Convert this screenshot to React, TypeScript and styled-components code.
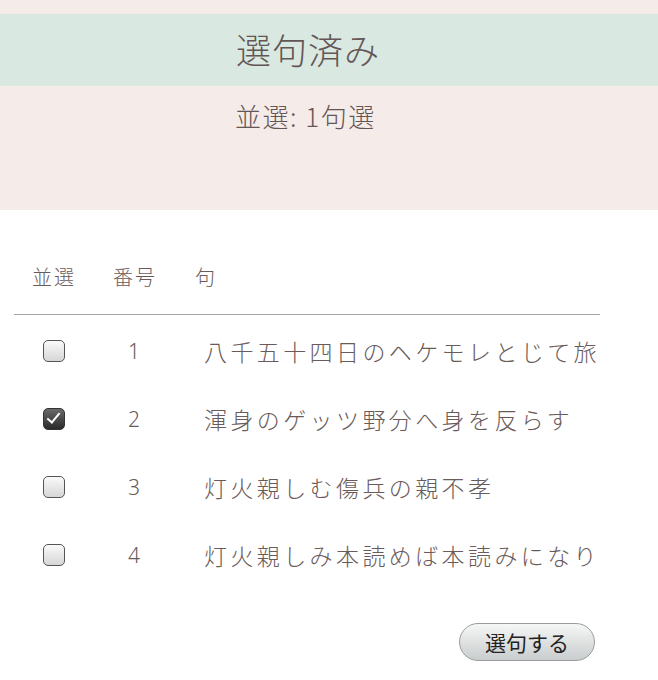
import React, { useState } from 'react';
import styled, { createGlobalStyle } from 'styled-components';

const GlobalStyle = createGlobalStyle`
    html, body {
        margin: 0;
        padding: 0;
        background: #ffffff;
    }
    body {
        font-family: "Noto Sans CJK JP", "Noto Sans", sans-serif;
        font-weight: 300;
        color: #6a5b5b;
    }
`

const Header = styled.header`
    background: #f5ebe8;
    padding-top: 14px;
    height: 196px;
`

const TitleBand = styled.div`
    background: #d9e8e0;
    height: 72px;
    display: flex;
    align-items: center;
    padding-left: 236px;
`

const Title = styled.h1`
    margin: -3px 0 0;
    font-size: 35px;
    font-weight: 300;
    letter-spacing: 1px;
    line-height: 1;
    color: #645656;
`

const Summary = styled.p`
    margin: 17px 0 0;
    padding-left: 235px;
    font-size: 26px;
    letter-spacing: 1.5px;
    line-height: 1;
    color: #645656;
`

const Section = styled.section`
    padding: 28px 0 0 14px;
`

const Grid = styled.div`
    width: 584px;
    display: grid;
    grid-template-columns: 80px 82px 1fr;
`

const HeadCell = styled.div<{ $left?: boolean }>`
    height: 76px;
    display: flex;
    align-items: center;
    justify-content: ${p => (p.$left ? 'flex-start' : 'center')};
    padding-left: ${p => (p.$left ? '19px' : '0')};
    font-size: 20px;
    letter-spacing: 2px;
    border-bottom: 1px solid #a9a2a2;
`

const Cell = styled.div<{ $left?: boolean; $first?: boolean }>`
    height: 68px;
    margin-top: ${p => (p.$first ? '2px' : '0')};
    display: flex;
    align-items: center;
    justify-content: ${p => (p.$left ? 'flex-start' : 'center')};
    padding-left: ${p => (p.$left ? '28px' : '0')};
    white-space: nowrap;
`

const Num = styled.span`
    font-family: "Noto Sans", sans-serif;
    font-size: 21px;
    margin-left: -2px;
`

const Haiku = styled.span`
    font-size: 23px;
    letter-spacing: 3.4px;
`

const Check = styled.input`
    appearance: none;
    width: 22px;
    height: 22px;
    margin: 0;
    border: 1.5px solid #555;
    border-radius: 5px;
    background: linear-gradient(#fafafa, #d6d6d6);
    position: relative;
    cursor: pointer;
    &:checked {
        background: linear-gradient(#6a6a6a, #2a2a2a);
        border-color: #333;
    }
    &:checked::after {
        content: '';
        position: absolute;
        left: 6px;
        top: 1px;
        width: 5px;
        height: 11px;
        border: solid #fff;
        border-width: 0 2.5px 2.5px 0;
        transform: rotate(40deg);
    }
`

const Footer = styled.div`
    display: flex;
    justify-content: flex-end;
    padding: 34px 63px 0 0;
`

const Button = styled.button`
    width: 136px;
    height: 38px;
    border-radius: 19px;
    border: 1.5px solid #9a9c9c;
    background: linear-gradient(#f6f6f6, #c9cdcd);
    font-family: "Noto Sans CJK JP", sans-serif;
    font-size: 21px;
    color: #222;
    padding: 0;
    cursor: pointer;
`

const haikus = [
    '八千五十四日のヘケモレとじて旅',
    '渾身のゲッツ野分へ身を反らす',
    '灯火親しむ傷兵の親不孝',
    '灯火親しみ本読めば本読みになり',
]

const App: React.FC = () => {
    const [checked, setChecked] = useState<number[]>([1])

    const toggle = (i: number) =>
        setChecked(c => (c.includes(i) ? c.filter(x => x !== i) : [...c, i]))

    return (
        <>
            <GlobalStyle />
            <Header>
                <TitleBand>
                    <Title>選句済み</Title>
                </TitleBand>
                <Summary>並選: {checked.length}句選</Summary>
            </Header>
            <Section>
                <Grid>
                    <HeadCell>並選</HeadCell>
                    <HeadCell>番号</HeadCell>
                    <HeadCell $left>句</HeadCell>
                    {haikus.map((text, i) => (
                        <React.Fragment key={text}>
                            <Cell $first={i === 0}>
                                <Check
                                    type="checkbox"
                                    checked={checked.includes(i)}
                                    onChange={() => toggle(i)}
                                />
                            </Cell>
                            <Cell $first={i === 0}>
                                <Num>{i + 1}</Num>
                            </Cell>
                            <Cell $left $first={i === 0}>
                                <Haiku>{text}</Haiku>
                            </Cell>
                        </React.Fragment>
                    ))}
                </Grid>
                <Footer>
                    <Button>選句する</Button>
                </Footer>
            </Section>
        </>
    )
}

export default App
